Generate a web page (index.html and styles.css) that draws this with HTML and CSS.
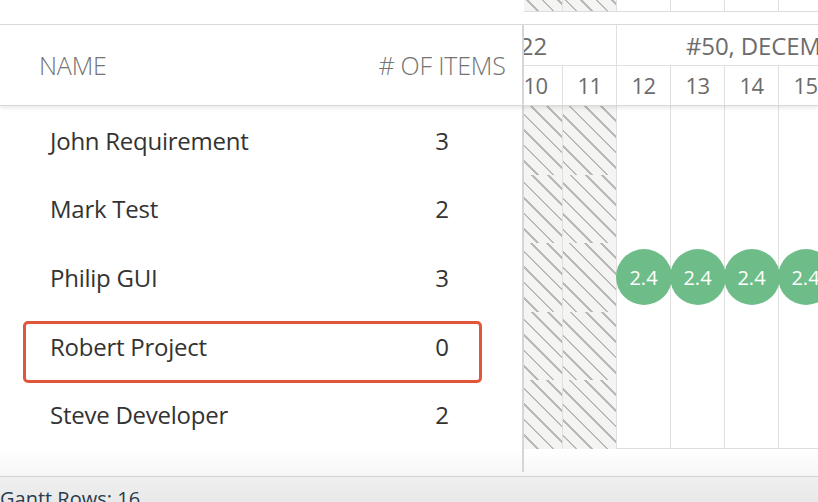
FILE: index.html
```html
<!DOCTYPE html>
<html>
<head>
<meta charset="utf-8">
<link rel="stylesheet" href="styles.css">
</head>
<body>
<div class="app">
  <div class="strip">
    <div class="pane-left"></div>
    <div class="pane-right">
      <div class="track strip-track">
        <div class="cell off"></div><div class="cell off"></div><div class="cell"></div><div class="cell"></div><div class="cell"></div><div class="cell"></div>
      </div>
    </div>
  </div>

  <div class="head">
    <div class="pane-left head-left">
      <div class="col-name">NAME</div>
      <div class="col-count"># OF ITEMS</div>
    </div>
    <div class="pane-right head-right">
      <div class="weeks">
        <div class="week">#49, DECEMBER 2022</div>
        <div class="week">#50, DECEMBER 2022</div>
      </div>
      <div class="track days">
        <div class="cell">10</div><div class="cell">11</div><div class="cell">12</div><div class="cell">13</div><div class="cell">14</div><div class="cell">15</div>
      </div>
    </div>
  </div>

  <div class="body">
    <div class="pane-left rows">
      <div class="row"><span class="name">John Requirement</span><span class="count">3</span></div>
      <div class="row"><span class="name">Mark Test</span><span class="count">2</span></div>
      <div class="row"><span class="name">Philip GUI</span><span class="count">3</span></div>
      <div class="row"><span class="name">Robert Project</span><span class="count">0</span></div>
      <div class="row"><span class="name">Steve Developer</span><span class="count">2</span></div>
      <div class="highlight"></div>
    </div>
    <div class="pane-right">
      <div class="track grid">
        <div class="cell off"></div><div class="cell off"></div><div class="cell"></div><div class="cell"></div><div class="cell"></div><div class="cell"></div>
        <div class="cell off"></div><div class="cell off"></div><div class="cell"></div><div class="cell"></div><div class="cell"></div><div class="cell"></div>
        <div class="cell off"></div><div class="cell off"></div><div class="cell"><span class="dot">2.4</span></div><div class="cell"><span class="dot">2.4</span></div><div class="cell"><span class="dot">2.4</span></div><div class="cell"><span class="dot">2.4</span></div>
        <div class="cell off"></div><div class="cell off"></div><div class="cell"></div><div class="cell"></div><div class="cell"></div><div class="cell"></div>
        <div class="cell off"></div><div class="cell off"></div><div class="cell"></div><div class="cell"></div><div class="cell"></div><div class="cell"></div>
      </div>
    </div>
  </div>

  <div class="filler">
    <div class="pane-left"></div>
    <div class="pane-right"></div>
  </div>

  <div class="status">Gantt Rows: 16</div>
</div>
</body>
</html>
```

FILE: styles.css
```css
* { box-sizing: border-box; }
html, body { margin: 0; padding: 0; }
body {
  width: 818px;
  height: 502px;
  overflow: hidden;
  background: #fff;
  font-family: "Open Sans", "Noto Sans", sans-serif;
}
.app {
  display: flex;
  flex-direction: column;
  height: 502px;
}
.pane-left {
  width: 524px;
  flex: none;
  border-right: 2px solid #d6d6d6;
  position: relative;
}
.pane-right {
  flex: 1;
  overflow: hidden;
  min-width: 0;
}
.track {
  display: grid;
  grid-template-columns: repeat(6, 54px);
  margin-left: -15px;
  width: 324px;
}
.cell {
  border-right: 1px solid #e0e0e0;
}
.off {
  background-color: #f4f5f3;
  background-image: repeating-linear-gradient(45deg, transparent 0 8.6px, #b9b9b9 8.6px 10.4px, transparent 10.4px 11px);
}

/* top strip */
.strip {
  display: flex;
  height: 25px;
  flex: none;
  border-bottom: 1px solid #dcdcdc;
}
.strip .pane-left { border-right-color: #fff; }
.strip-track {
  height: 12px;
  border-bottom: 1px solid #dcdcdc;
  width: auto;
  margin-right: -40px;
}

/* header */
.head {
  display: flex;
  height: 81px;
  flex: none;
  border-bottom: 1px solid #d8d8d8;
  box-shadow: 0 2px 4px rgba(0, 0, 0, 0.09);
  position: relative;
  z-index: 2;
  background: #fff;
}
.head-left {
  display: flex;
  align-items: center;
  padding-left: 39px;
  padding-right: 16px;
  color: #747474;
  font-size: 25px;
  font-weight: 300;
  letter-spacing: -0.2px;
}
.col-name { flex: 1; }
.col-count { width: 128px; text-align: center; white-space: nowrap; }
.head-right {
  display: flex;
  flex-direction: column;
}
.weeks {
  display: flex;
  height: 41px;
  margin-left: -285px;
  border-bottom: 1px solid #e0e0e0;
}
.week {
  flex: none;
  width: 378px;
  border-right: 1px solid #e0e0e0;
  text-align: center;
  font-size: 24px;
  color: #6c6c6c;
  line-height: 42px;
  white-space: nowrap;
  letter-spacing: -0.1px;
}
.days {
  flex: 1;
}
.days .cell {
  text-align: center;
  font-size: 22px;
  color: #6c6c6c;
  line-height: 39px;
  letter-spacing: -0.5px;
}

/* body */
.body {
  display: flex;
  flex: none;
  height: 343px;
}
.rows {
  display: flex;
  flex-direction: column;
}
.row {
  height: 68.6px;
  display: flex;
  align-items: center;
  padding-left: 50px;
  padding-right: 16px;
  font-size: 24px;
  color: #333;
  letter-spacing: -0.25px;
}
.name { flex: 1; }
.count {
  width: 128px;
  text-align: center;
}
.highlight {
  position: absolute;
  left: 23px;
  top: 215px;
  width: 459px;
  height: 62px;
  border: 3px solid #e3553a;
  border-radius: 5px;
}
.grid {
  grid-template-rows: repeat(5, 68.6px);
  height: 343px;
  border-bottom: 1px solid #dcdcdc;
  margin-right: -40px;
  width: auto;
}
.grid .cell {
  display: flex;
  align-items: center;
  justify-content: center;
}
.dot {
  flex: none;
  width: 56px;
  height: 56px;
  border-radius: 50%;
  background: #6ebd89;
  color: #fff;
  font-size: 20px;
  display: flex;
  align-items: center;
  justify-content: center;
  margin: 0 -1px;
  position: relative;
}

/* filler */
.filler {
  display: flex;
  flex: 1;
  background: linear-gradient(#fff, #f6f6f6);
  border-bottom: 1px solid #d2d2d2;
}
.filler .pane-left {
  margin-bottom: 4px;
}
.status {
  flex: none;
  height: 25px;
  background: linear-gradient(#efefef, #e9e9e9);
  color: #2a3c4e;
  font-size: 20px;
  line-height: 1;
  padding-top: 12px;
  overflow: hidden;
  white-space: nowrap;
}
```
